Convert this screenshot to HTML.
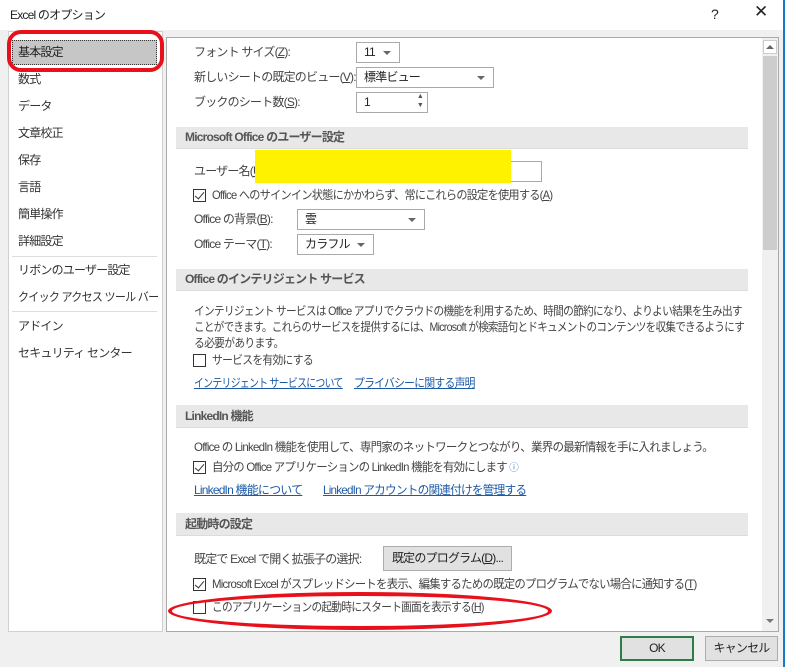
<!DOCTYPE html>
<html><head><meta charset="utf-8"><style>
*{margin:0;padding:0;box-sizing:border-box}
body{width:785px;height:667px;background:#f0f0f0;font-family:"Liberation Sans","Noto Sans CJK JP",sans-serif;font-size:12px;color:#444;position:relative;overflow:hidden;letter-spacing:-0.8px}
.a{position:absolute}
.t{position:absolute;line-height:16px;white-space:nowrap;transform-origin:0 50%}
.hd{position:absolute;left:176px;width:572px;background:#e8e8e8;font-weight:bold;color:#555;padding-left:9px;border-bottom:1px solid #dcdcdc}
.sel{position:absolute;border:1px solid #aaa;background:#fff;height:21px;line-height:19px;padding-left:7px;color:#222}
.sel i{position:absolute;right:8px;top:8px;border-left:4px solid transparent;border-right:4px solid transparent;border-top:4px solid #666}
.cb{position:absolute;width:13px;height:13px;border:1px solid #333;background:#fff}
.ck::after{content:"";position:absolute;left:3px;top:0px;width:4px;height:8px;border-right:1.5px solid #333;border-bottom:1.5px solid #333;transform:rotate(40deg)}
.ln{color:#1c5aa6;text-decoration:underline}
.nav{position:absolute;left:18px;line-height:16px;color:#333}
u{text-decoration:underline}
.red{position:absolute;border:4px solid #e8111b;border-radius:50%/50%}
</style></head><body>
<div class="a" style="left:0;top:0;width:785px;height:30px;background:#fff"></div>
<div class="a" style="left:783px;top:0;width:2px;height:667px;background:#1979ca"></div>
<div class="t" style="left:10px;top:7px;color:#222">Excel のオプション</div>
<div class="t" style="left:711px;top:6px;font-size:14px;color:#222">?</div>
<div class="t" style="left:754px;top:4px;font-size:17px;color:#222">✕</div>

<div class="a" style="left:8px;top:31px;width:155px;height:601px;background:#fff;border:1px solid #d0d0d0"></div>
<div class="a" style="left:12px;top:40px;width:145px;height:25px;background:#c6c6c6;border:1px dotted #333"></div>
<div class="nav" style="top:44px;color:#222">基本設定</div>
<div class="nav" style="top:71px">数式</div>
<div class="nav" style="top:98px">データ</div>
<div class="nav" style="top:125px">文章校正</div>
<div class="nav" style="top:152px">保存</div>
<div class="nav" style="top:179px">言語</div>
<div class="nav" style="top:206px">簡単操作</div>
<div class="nav" style="top:233px">詳細設定</div>
<div class="a" style="left:12px;top:256px;width:145px;height:1px;background:#ddd"></div>
<div class="nav" style="top:262px">リボンのユーザー設定</div>
<div class="nav" style="top:289px;transform:scaleX(0.92);transform-origin:0 50%">クイック アクセス ツール バー</div>
<div class="a" style="left:12px;top:311px;width:145px;height:1px;background:#ddd"></div>
<div class="nav" style="top:318px">アドイン</div>
<div class="nav" style="top:345px">セキュリティ センター</div>
<div class="red" style="left:7px;top:30px;width:157px;height:42px;border-radius:14px"></div>

<div class="a" style="left:166px;top:37px;width:613px;height:595px;background:#fff;border:1px solid #aaa"></div>
<div class="a" style="left:762px;top:38px;width:16px;height:593px;background:#f0f0f0"></div>
<div class="a" style="left:763px;top:40px;width:14px;height:14px;background:#fff;border:1px solid #ccc"></div>
<div class="a" style="left:766px;top:45px;border-left:4px solid transparent;border-right:4px solid transparent;border-bottom:4px solid #666"></div>
<div class="a" style="left:763px;top:56px;width:14px;height:194px;background:#cdcdcd"></div>
<div class="a" style="left:766px;top:619px;border-left:4px solid transparent;border-right:4px solid transparent;border-top:4px solid #777"></div>

<div class="t" style="left:194px;top:44px">フォント サイズ(<u>Z</u>):</div>
<div class="sel" style="left:356px;top:42px;width:44px">11<i></i></div>
<div class="t" style="left:194px;top:69px">新しいシートの既定のビュー(<u>V</u>):</div>
<div class="sel" style="left:356px;top:67px;width:138px">標準ビュー<i></i></div>
<div class="t" style="left:194px;top:94px">ブックのシート数(<u>S</u>):</div>
<div class="sel" style="left:356px;top:92px;width:72px">1<span class="a" style="right:4px;top:-1px;font-size:7px;line-height:9px;color:#555">▲<br>▼</span></div>

<div class="hd" style="top:127px;height:22px;line-height:21px">Microsoft Office のユーザー設定</div>
<div class="t" style="left:194px;top:163px">ユーザー名(<u>U</u>):</div>
<div class="a" style="left:511px;top:161px;width:31px;height:21px;border:1px solid #aaa;border-left:none"></div>
<div class="a" style="left:255px;top:150px;width:256px;height:33px;background:#fff200"></div>
<div class="cb ck" style="left:193px;top:189px"></div>
<div class="t" style="left:212px;top:187px;transform:scaleX(0.93)">Office へのサインイン状態にかかわらず、常にこれらの設定を使用する(<u>A</u>)</div>
<div class="t" style="left:194px;top:211px">Office の背景(<u>B</u>):</div>
<div class="sel" style="left:297px;top:209px;width:128px">雲<i></i></div>
<div class="t" style="left:194px;top:236px">Office テーマ(<u>T</u>):</div>
<div class="sel" style="left:297px;top:234px;width:77px">カラフル<i></i></div>

<div class="hd" style="top:269px;height:22px;line-height:21px">Office のインテリジェント サービス</div>
<div class="t" style="left:194px;top:303px;transform:scaleX(0.89)">インテリジェント サービスは Office アプリでクラウドの機能を利用するため、時間の節約になり、よりよい結果を生み出す</div>
<div class="t" style="left:194px;top:319px;transform:scaleX(0.88)">ことができます。これらのサービスを提供するには、Microsoft が検索語句とドキュメントのコンテンツを収集できるようにす</div>
<div class="t" style="left:194px;top:335px;transform:scaleX(0.9)">る必要があります。</div>
<div class="cb" style="left:193px;top:354px"></div>
<div class="t" style="left:212px;top:352px;transform:scaleX(0.9)">サービスを有効にする</div>
<div class="t ln" style="left:194px;top:375px;transform:scaleX(0.82)">インテリジェント サービスについて</div>
<div class="t ln" style="left:354px;top:375px;transform:scaleX(0.9)">プライバシーに関する声明</div>

<div class="hd" style="top:405px;height:23px;line-height:22px">LinkedIn 機能</div>
<div class="t" style="left:194px;top:439px;transform:scaleX(0.96)">Office の LinkedIn 機能を使用して、専門家のネットワークとつながり、業界の最新情報を手に入れましょう。</div>
<div class="cb ck" style="left:193px;top:461px"></div>
<div class="t" style="left:212px;top:459px;transform:scaleX(0.95)">自分の Office アプリケーションの LinkedIn 機能を有効にします <span style="color:#3b7fd0;font-size:10px">ⓘ</span></div>
<div class="t ln" style="left:194px;top:482px">LinkedIn 機能について</div>
<div class="t ln" style="left:323px;top:482px;transform:scaleX(0.97)">LinkedIn アカウントの関連付けを管理する</div>

<div class="hd" style="top:513px;height:23px;line-height:22px">起動時の設定</div>
<div class="t" style="left:194px;top:551px">既定で Excel で開く拡張子の選択:</div>
<div class="a" style="left:383px;top:546px;width:129px;height:25px;border:1px solid #adadad;background:#e1e1e1;line-height:23px;text-align:center;color:#222">既定のプログラム(<u>D</u>)...</div>
<div class="cb ck" style="left:193px;top:578px"></div>
<div class="t" style="left:212px;top:576px;transform:scaleX(0.95)">Microsoft Excel がスプレッドシートを表示、編集するための既定のプログラムでない場合に通知する(<u>T</u>)</div>
<div class="cb" style="left:193px;top:601px"></div>
<div class="t" style="left:212px;top:599px;transform:scaleX(0.89)">このアプリケーションの起動時にスタート画面を表示する(<u>H</u>)</div>
<div class="red" style="left:168px;top:592px;width:384px;height:38px;border-radius:50%"></div>

<div class="a" style="left:620px;top:636px;width:74px;height:25px;border:2px solid #2d7d46;background:#e1e1e1;line-height:21px;text-align:center;color:#222">OK</div>
<div class="a" style="left:705px;top:636px;width:73px;height:25px;border:1px solid #adadad;background:#e1e1e1;line-height:23px;text-align:center;color:#222">キャンセル</div>
</body></html>
